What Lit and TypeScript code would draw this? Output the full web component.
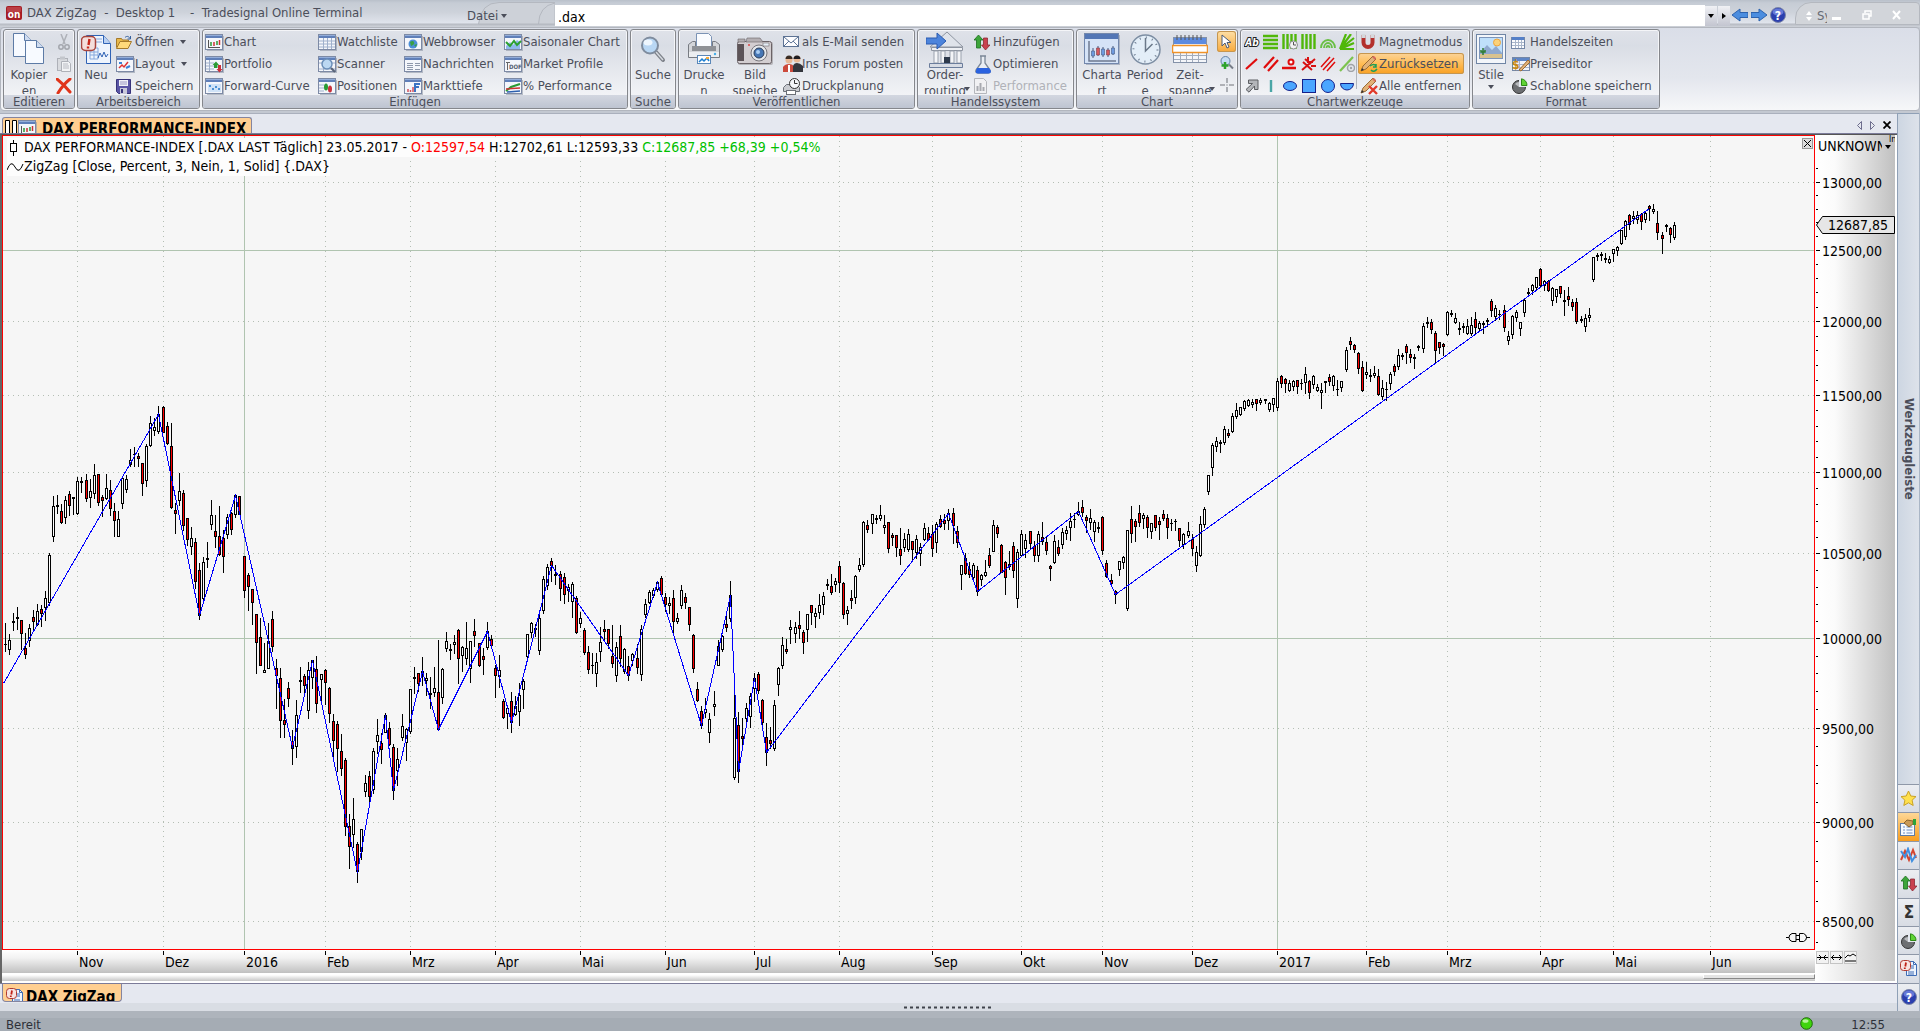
import { LitElement, html, svg, css, type TemplateResult } from "lit";
import { customElement } from "lit/decorators.js";

/* ------------------------------------------------------------------ */
/* Chart data                                                          */
/* ------------------------------------------------------------------ */

interface Segment {
  x: number;
  y: number;
  unit: number;
  rows: string;
}

interface Candle {
  x: number;
  high: number;
  top: number;
  bottom: number;
  low: number;
  kind: string;
}

// Each row is "x high bodyTop bodyBottom low kind" in sub-pixel units relative
// to the segment origin. Kinds: r = falling, w = rising, k = doji.
const SEGMENTS: Segment[] = [
  {
    x: 0,
    y: 380,
    unit: 3,
    rows: `16 729 792 794 815 k|28 762 780 808 824 w|40 701 723 726 752 k|52 681 711 714 749 k|64 720 720 760 808 r|76 759 804 824 836 r|88 732 744 780 800 w|100 690 711 724 750 r|112 672 693 734 735 w|124 675 687 700 738 r|136 633 655 682 722 w|148 519 525 667 675 w|160 350 379 470 483 w|172 345 376 379 399 k|184 372 393 427 429 r|196 350 360 412 429 w|208 333 342 376 405 r|220 351 352 355 402 k|232 291 303 401 404 w|244 291 304 307 336 k|259 282 300 355 365 r|271 297 334 352 383 w|283 252 286 341 356 w|295 282 283 367 375 r|307 345 352 361 410 r|319 282 325 355 357 w|331 300 331 385 407 r|343 370 393 421 470 r|355 393 418 469 470 w|367 290 295 370 386 w|379 286 298 328 338 w|391 207 241 252 260 w|403 201 222 224 258 k|415 219 229 235 258 r|427 249 250 310 345 r|439 193 199 301 318 w|451 108 130 196 198 w|463 114 142 151 165 w|475 78 103 155 161 w|490 78 82 157 158 r|502 126 139 190 192 r|514 129 199 382 386 r|526 369 390 400 459 r|538 281 334 361 375 w|550 330 340 436 450 r|562 415 415 478 496 r|574 441 475 499 524 w|586 475 487 604 626 r|598 549 570 706 717 r|610 531 547 655 657 w|622 486 535 538 563 k|634 360 406 433 447 w|646 405 453 469 503 r|658 378 469 523 525 r|670 450 475 529 576 r|682 402 412 463 476 w|694 396 400 448 462 r|706 345 346 403 411 w|718 348 349 403 404 r|733 528 529 631 651 r|745 579 586 619 690 r|757 628 628 667 732 r|769 703 703 787 879 r|781 715 771 856 857 r|793 789 870 877 878 w|805 729 783 865 866 w|817 693 718 799 815 r|829 837 865 886 984 r|841 864 895 1021 1071 r|853 958 1021 1033 1071 r|865 906 925 955 978 r|877 1050 1083 1105 1152 r|889 960 1006 1099 1131 w|901 861 901 904 936 k|913 882 889 916 938 r|925 846 871 991 1014 w|937 840 841 892 924 w|949 828 868 970 996 r|964 882 883 898 970 w|976 867 871 907 972 r|988 922 925 1000 1026 r|1000 1002 1024 1081 1140 r|1012 1023 1033 1105 1175 r|1024 1062 1114 1165 1185 r|1036 1134 1141 1339 1365 r|1048 1302 1339 1399 1464 r|1060 1254 1318 1363 1403 w|1072 1386 1393 1475 1506 r|1084 1347 1348 1413 1437 w|1096 1185 1210 1234 1250 w|1108 1173 1189 1249 1283 r|1120 1104 1114 1228 1240 w|1132 1017 1066 1084 1120 w|1144 1060 1090 1108 1149 r|1156 999 1006 1057 1058 w|1168 1026 1045 1093 1095 r|1180 1092 1102 1231 1257 r|1192 1104 1138 1171 1216 w`,
  },
  {
    x: 400,
    y: 530,
    unit: 3,
    rows: `7 552 589 622 632 w|19 594 598 637 690 w|31 477 478 604 610 w|43 411 441 445 491 k|55 430 430 460 483 r|67 381 424 434 465 w|79 429 445 451 495 w|91 441 490 493 534 k|103 411 475 487 500 w|115 330 487 598 600 r|127 414 418 502 519 w|139 306 334 355 363 w|151 342 357 360 387 k|163 315 337 343 371 w|175 297 301 385 459 r|187 348 352 376 423 w|199 276 355 385 402 w|211 333 334 415 456 w|223 267 304 316 348 r|238 340 340 406 410 r|250 354 379 388 432 r|262 276 304 352 357 w|274 315 328 346 350 r|286 405 415 436 501 r|298 375 421 439 471 w|310 508 514 563 566 r|322 531 535 550 594 w|334 486 514 577 606 r|346 498 528 553 557 w|358 459 496 544 585 w|370 447 454 478 534 w|382 312 313 379 381 w|394 276 280 307 322 w|406 282 295 298 318 k|418 252 265 361 372 w|430 138 148 241 251 w|442 102 112 166 177 w|454 84 94 106 153 r|466 105 132 135 162 k|481 124 133 175 210 r|493 129 142 193 219 r|505 162 172 180 215 w|517 156 163 214 263 w|529 198 205 307 309 r|541 246 265 280 293 w|553 295 301 367 372 r|565 348 367 418 429 r|577 369 405 407 431 k|589 369 397 430 468 w|601 291 337 364 393 w|613 270 298 304 333 r|625 297 298 340 356 r|637 285 379 400 413 r|649 337 352 436 453 w|661 285 319 385 410 r|673 354 358 423 430 w|685 378 409 436 450 r|697 370 373 391 407 w|712 342 385 412 429 r|724 285 298 433 450 w|736 208 223 253 261 w|748 180 187 217 221 w|760 174 180 196 203 w|772 153 157 178 183 w|784 138 145 193 195 r|796 190 202 223 243 r|808 202 220 226 249 w|820 181 205 274 309 r|832 249 265 274 281 w|844 165 181 226 234 w|856 189 202 217 236 r|868 232 232 283 302 r|880 312 316 415 426 r|892 456 478 511 513 r|904 528 544 586 594 r|916 504 538 546 561 w|928 549 568 607 636 w|943 483 523 529 555 w|955 330 349 406 407 w|967 315 319 358 365 w|979 258 283 292 305 r|991 153 196 265 275 w|1003 495 565 742 749 w|1015 546 586 724 756 r|1027 564 619 625 642 r|1039 519 535 565 575 w|1051 489 499 559 591 w|1063 429 445 475 515 w|1075 426 433 481 489 r|1087 507 511 577 583 r|1099 579 622 667 705 r|1111 591 631 640 654 r|1123 510 526 655 660 w|1135 411 415 463 495 w`,
  },
  {
    x: 780,
    y: 480,
    unit: 3,
    rows: `7 471 496 556 564 w|19 477 508 514 521 r|31 420 442 448 489 w|46 426 442 460 486 w|58 393 436 445 474 r|70 450 457 487 519 r|82 402 403 448 483 w|94 375 376 397 432 r|106 384 400 409 441 w|118 342 376 397 415 w|130 336 349 373 402 w|142 297 312 316 327 k|154 282 319 337 342 r|166 295 304 313 333 w|178 243 259 307 336 r|190 307 310 403 414 r|202 378 391 400 432 w|214 330 355 361 384 r|226 285 289 352 369 w|238 234 256 268 273 w|250 123 127 253 258 w|262 121 136 149 158 r|277 102 103 130 159 w|289 105 114 118 131 k|301 75 106 115 120 w|313 105 136 142 159 w|325 126 127 205 216 r|337 159 166 172 195 r|349 165 166 202 228 r|361 144 208 226 252 r|373 159 178 202 213 w|385 147 163 208 215 w|397 183 184 208 242 r|409 165 178 217 234 w|421 190 202 220 255 w|433 129 145 178 180 w|445 141 160 178 180 r|457 135 163 205 228 r|469 126 133 187 216 w|481 105 118 139 141 r|493 102 121 130 147 r|505 87 100 121 147 w|520 84 100 136 189 r|532 138 154 187 203 r|544 255 256 283 327 w|556 219 235 280 282 r|568 246 268 283 291 r|580 249 256 292 294 w|592 258 271 334 345 r|604 282 286 298 315 w|616 240 277 286 288 w|628 204 226 256 261 r|640 120 136 214 215 w|652 135 142 160 171 r|664 192 196 277 278 r|676 243 247 292 342 r|688 213 253 259 267 w|700 186 199 271 291 r|712 207 217 355 381 w|724 150 163 226 230 w|736 162 181 205 231 w|751 153 154 190 205 r|763 183 199 226 243 r|775 153 163 226 245 w|787 126 172 184 192 r|799 171 187 211 222 r|811 255 259 265 300 r|823 165 184 247 249 w|835 180 202 220 227 r|847 144 157 193 204 w|859 138 151 160 177 w|871 99 124 142 180 w|883 99 117 119 141 k|895 66 94 103 105 w|907 60 82 97 108 r|919 105 112 121 158 r|931 87 115 127 147 w|943 120 127 154 183 w|955 126 142 145 158 k|967 108 112 211 222 r|979 240 250 289 292 r|994 282 301 310 312 r|1006 330 333 343 369 r|1018 243 244 268 285 w|1030 228 232 247 266 w|1042 150 151 385 390 w|1054 78 118 160 186 r|1066 117 124 139 183 r|1078 75 100 127 138 r|1090 99 106 115 144 w|1102 105 112 142 171 r|1114 129 130 154 174 w|1126 105 106 142 150 r|1138 112 124 133 177 r|1150 90 103 115 120 r|1162 102 115 142 174 r|1174 117 129 131 150 k|1186 117 123 125 150 k|1198 144 145 181 198 r|1210 159 163 193 205 w|1225 126 154 166 171 w|1237 162 178 205 225 r|1249 198 217 256 273 w|1261 108 133 226 228 w|1273 81 88 133 141 w`,
  },
  {
    x: 1200,
    y: 180,
    unit: 2.904,
    rows: `24 885 885 935 942 w|36 789 796 863 885 w|47 771 784 799 813 w|59 780 787 791 816 k|71 738 748 788 792 w|82 747 760 767 771 r|94 699 709 754 756 w|106 669 691 709 714 w|117 681 682 703 706 w|129 660 664 685 690 w|141 657 661 676 680 w|152 657 667 673 681 w|164 657 658 670 690 r|175 654 661 668 673 w|190 657 658 662 669 k|201 666 670 689 693 w|213 654 655 673 693 w|225 594 604 682 690 w|236 585 589 610 621 r|248 594 598 610 636 r|260 600 610 631 633 w|271 600 604 619 630 w|283 600 601 619 639 r|295 597 609 611 627 k|306 561 583 607 639 w|318 600 604 637 654 r|329 585 589 613 624 w|341 612 622 631 633 w|352 609 631 638 684 w|364 603 604 607 636 k|376 582 592 604 615 r|387 585 589 616 630 w|399 600 627 629 645 k|411 603 604 622 633 w|425 501 511 569 573 w|437 471 484 493 507 r|448 492 496 508 516 r|460 516 520 566 579 r|472 543 562 631 633 r|483 546 577 583 594 w|495 567 587 590 603 k|506 558 580 587 591 w|518 567 589 643 645 r|530 600 625 649 657 w|541 606 627 629 660 k|553 576 583 610 627 w|564 552 559 574 585 r|576 507 526 559 567 w|588 519 525 530 537 k|599 492 499 517 549 r|611 507 523 532 546 r|622 522 531 534 564 k|634 495 498 502 510 k|648 429 439 505 516 w|660 411 426 430 441 k|672 417 427 448 460 r|683 453 460 512 549 r|695 486 487 502 519 r|707 489 492 499 525 r|718 393 397 463 465 w|730 390 399 403 408 k|741 399 415 427 429 w|753 426 444 447 462 k|765 429 438 442 456 k|776 417 439 460 462 w|788 411 436 460 465 w|799 396 418 442 459 r|811 423 430 445 450 w|823 423 429 432 459 k|834 414 421 425 438 k|846 357 364 391 408 r|858 375 385 409 420 w|869 390 402 404 417 k|884 375 391 442 453 r|895 453 469 482 492 w|907 405 409 463 474 w|919 390 397 412 423 w|930 426 427 445 465 w|942 357 361 397 408 w|953 324 337 341 348 k|965 312 317 331 342 w|977 291 292 322 327 w|988 264 268 316 318 r|1000 300 304 316 330 w|1012 300 304 331 333 r|1023 321 325 361 375 w|1035 327 328 349 366 w|1046 318 319 341 351 r|1058 330 361 364 405 k|1069 321 349 358 375 r|1081 357 367 379 390 r|1093 354 367 425 429 r|1107 408 417 422 426 k|1119 402 415 439 453 w|1131 384 406 412 423 w|1142 231 232 298 303 w|1154 219 226 230 240 k|1165 216 223 226 240 k|1177 219 234 238 246 k|1189 228 238 247 249 w|1200 207 208 220 243 w|1212 198 202 211 225 w|1223 150 151 190 192 w|1235 120 124 169 177 w|1247 102 106 133 147 r|1258 93 109 116 129 w|1270 93 106 118 129 w|1282 99 103 124 147 r|1293 96 100 118 126 w|1305 75 79 85 120 r|1316 72 88 95 99 w|1328 93 130 157 177 r|1343 156 166 175 219 r|1354 132 135 138 153 k|1366 141 145 163 186 r|1378 126 136 172 177 w`,
  },
];

const CANDLES: Candle[] = SEGMENTS.flatMap((s) =>
  s.rows.split("|").map((row) => {
    const p = row.split(" ");
    const py = (v: string) => s.y + Math.floor(Number(v) / 3);
    return {
      x: s.x + Math.floor(Number(p[0]) / s.unit),
      high: py(p[1]),
      top: py(p[2]),
      bottom: py(p[3]),
      low: py(p[4]),
      kind: p[5],
    };
  }),
);

const ZIGZAG: [number, number][] = [
  [3, 683], [158, 414], [199, 615], [235, 495], [292, 747], [312, 660],
  [357, 872], [385, 715], [393, 790], [422, 671], [438, 729], [487, 631],
  [511, 722], [551, 565], [628, 675], [657, 582], [701, 725], [730, 595],
  [738, 771], [754, 678], [766, 752], [948, 513], [977, 591], [1078, 511],
  [1115, 594], [1649, 208],
];

const MONTHS: { x: number; label: string; year?: boolean }[] = [
  { x: 77, label: "Nov" },
  { x: 163, label: "Dez" },
  { x: 244, label: "2016", year: true },
  { x: 325, label: "Feb" },
  { x: 410, label: "Mrz" },
  { x: 495, label: "Apr" },
  { x: 580, label: "Mai" },
  { x: 665, label: "Jun" },
  { x: 754, label: "Jul" },
  { x: 839, label: "Aug" },
  { x: 932, label: "Sep" },
  { x: 1021, label: "Okt" },
  { x: 1102, label: "Nov" },
  { x: 1192, label: "Dez" },
  { x: 1277, label: "2017", year: true },
  { x: 1366, label: "Feb" },
  { x: 1447, label: "Mrz" },
  { x: 1540, label: "Apr" },
  { x: 1613, label: "Mai" },
  { x: 1710, label: "Jun" },
];

// Plot area in chart coordinates, without its one-pixel border.
const PLOT = { x: 3, y: 136, w: 1811, h: 813 };
const priceY = (p: number) => Math.floor(182.3 + 1740 * Math.log(13000 / p));
const PRICES = [13000, 12500, 12000, 11500, 11000, 10500, 10000, 9500, 9000, 8500];
const MINOR_PRICES = Array.from({ length: 48 }, (_, i) => 8400 + i * 100).filter((p) => p % 500 !== 0);
// The axes span the plot together with its border.
const pctX = (x: number) => `left:${(((x - PLOT.x + 1) / (PLOT.w + 2)) * 100).toFixed(3)}%`;
const pctY = (y: number) => `top:${(((y - PLOT.y + 1) / (PLOT.h + 2)) * 100).toFixed(3)}%`;

/* ------------------------------------------------------------------ */
/* Icons                                                               */
/* ------------------------------------------------------------------ */

const icon = (w: number, h: number, body: TemplateResult) =>
  html`<svg class="icon" width=${w} height=${h} viewBox="0 0 ${w} ${h}" aria-hidden="true">${body}</svg>`;

const caret = html`<svg class="icon" width="6" height="4" viewBox="0 0 6 4" aria-hidden="true"><path d="M0 0h6L3 4z" fill="currentColor" /></svg>`;

// Small window frame that the insert icons share.
const win = (body: TemplateResult) =>
  icon(19, 17, svg`
    <rect x="2" y="2" width="17" height="15" fill="#8f97a6" opacity=".6" />
    <rect x=".5" y=".5" width="17" height="15" fill="#f4f6fb" stroke="#7d8aa5" />
    <rect x="1" y="1" width="16" height="3" fill="#5f7fb9" />
    <rect x="1" y="1" width="16" height="1" fill="#93add9" />${body}`);

const docPage = (x: number, y: number) => svg`
  <path d="M${x + 0.5} ${y + 0.5}h11l7 7v16h-18z" fill="#f7faff" stroke="#5d7ba6" />
  <path d="M${x + 11.5} ${y + 0.5}v7h7" fill="#cfdcf0" stroke="#5d7ba6" />`;

const pie = svg`
  <circle cx="8" cy="9" r="6.5" fill="#6d6f72" stroke="#333" />
  <path d="M4 6a5 5 0 0 1 4-2v5z" fill="#b9bbbe" />
  <path d="M8 9V1h8v8z" fill="#e4e8ef" />
  <path d="M10.500 7.500V.8a6.500 6.500 0 0 1 5.500 6.700z" fill="#5fd334" stroke="#2c8a14" />`;

const pencil = svg`
  <path d="M1 16l2-5L13 1l3 3L6 14z" fill="#e2b278" stroke="#9b6b33" />
  <path d="M12 2l2-1 2 2-1 2z" fill="#d66a5c" />
  <path d="M1 16l1-3 2 2z" fill="#333" />`;

const newsDoc = svg`
  <path d="M6.500 1.500h7l3 3v11h-10z" fill="#eef4fd" stroke="#3f6cb5" />
  <path d="M13.500 1.500v3h3M11 6h3M11 8h3M8 12h6M8 14h6" stroke="#3f6cb5" fill="none" />
  <rect x=".5" y=".5" width="10" height="10" rx="3" fill="#f7e3e0" stroke="#b03a30" />
  <path d="M6 2.500L5.300 6.500M4.800 7.500v1.500" stroke="#c02318" stroke-width="1.800" />`;

const help = svg`
  <circle cx="8" cy="8" r="7.500" fill="#2b3fae" stroke="#7d86a8" />
  <ellipse cx="8" cy="5" rx="5.500" ry="3.500" fill="#7f93e8" opacity=".7" />
  <text x="8" y="12.500" text-anchor="middle" font-size="12" font-weight="700" fill="#fff">?</text>`;

const arrowsUpDown = svg`
  <path d="M4.500 1L9 6H6.500v8h-4V6H0z" fill="#3da53a" stroke="#1d7020" stroke-width=".8" />
  <path d="M11.500 16L7.500 11h2V4h4v7H16z" fill="#c9414f" stroke="#8e2834" stroke-width=".8" />`;

const I = {
  app: icon(16, 14, svg`<rect width="16" height="14" rx="2" fill="#a51d24" /><rect x="1" y="1" width="14" height="5" rx="1" fill="#c9575b" opacity=".6" /><text x="8" y="12" text-anchor="middle" font-size="10" font-weight="700" fill="#fff">on</text>`),
  copy: icon(32, 32, svg`${docPage(0, 0)}${docPage(12, 7)}`),
  cut: icon(14, 16, svg`<path d="M4 0l4 10M10 0L6 10" stroke="#aeb1b8" stroke-width="1.500" /><circle cx="4" cy="13" r="2.200" fill="none" stroke="#a3a6ad" stroke-width="1.500" /><circle cx="10" cy="13" r="2.200" fill="none" stroke="#a3a6ad" stroke-width="1.500" />`),
  paste: icon(16, 17, svg`<rect x="1.500" y="2.500" width="10" height="12" fill="#d9dbdf" stroke="#aeb1b8" /><rect x="4" y=".5" width="5" height="3" fill="#c3c6cc" /><path d="M5.500 5.500h7l2 2v8h-9z" fill="#f2f3f5" stroke="#aeb1b8" /><path d="M7 8h5M7 10h6M7 12h6" stroke="#b9bbc2" />`),
  del: icon(16, 16, svg`<path d="M1 1c5 4 9 8 13 13M14 1C9 5 5 10 2 15" stroke="#e0341a" stroke-width="3" fill="none" stroke-linecap="round" />`),
  neu: icon(31, 31, svg`<path d="M5.500 1.500h17l7 8v20h-24z" fill="#eef4fd" stroke="#2f62b5" /><path d="M22.500 1.500v8h7" fill="#b9d0f2" stroke="#2f62b5" /><path d="M9 14h8v11H9zM13 14v11M9 18h8M9 21h8M15 5h6M15 8h6" stroke="#86a8dc" fill="none" /><path d="M17 24l2-5 2 4 2-5 2 5 2-3" stroke="#2f62b5" fill="none" /><rect x=".5" y="2.500" width="14" height="14" rx="4" fill="#f4dedb" stroke="#a8433b" stroke-width="1.500" /><path d="M8.500 5l-1 6M7 12.500v2" stroke="#c8281b" stroke-width="2.400" />`),
  open: icon(16, 14, svg`<path d="M.5 12.500v-9h5l1 1.500h6v3" fill="#e8b84a" stroke="#a5792a" /><path d="M.5 13.500L4 6.500h11.500L12 13.500z" fill="#ffd97a" stroke="#a5792a" /><path d="M9 2.500c2-2 4-1 5 1M14.500 1v3h-3" stroke="#35619e" fill="none" />`),
  layout: win(svg`<path d="M3 12l3-3 2 2 4-5" stroke="#d33" fill="none" stroke-width="1.500" /><path d="M10 12l4-2M3 7h3" stroke="#3b82d6" stroke-width="2" />`),
  save: icon(15, 15, svg`<path d="M.5.5h14v14H2.500l-2-2z" fill="#5a55a5" stroke="#37337a" /><rect x="3" y="1" width="9" height="6" fill="#f1f1f8" /><path d="M4 3h7M4 5h7" stroke="#9a98c4" /><rect x="4" y="9" width="7" height="6" fill="#c9c9da" /><rect x="5" y="10" width="2" height="4" fill="#37337a" />`),
  chart: win(svg`<path d="M3.500 14V6M3 13.500h12" stroke="#555" fill="none" /><path d="M6 8v4M12 7v4" stroke="#2a9a35" stroke-width="1.500" /><path d="M9 8v4M14.500 6v5" stroke="#c33" stroke-width="1.500" />`),
  portfolio: win(svg`<path d="M1 7h8M1 10h8M1 13h8M4.500 4v11" stroke="#9fb0cc" /><path d="M9 12V9H7.500L11 5.500 14 9h-1.500v3z" fill="#2a9a35" /><path d="M13 9v4h-1.500l3 3.500 3-3.500H16V9z" fill="#c8313b" />`),
  forward: win(svg`<rect x="3" y="6" width="13" height="8" fill="#cfe2f7" /><circle cx="5" cy="8" r="1" fill="#1f74c9" /><circle cx="8" cy="11" r="1" fill="#1f74c9" /><circle cx="11" cy="9" r="1" fill="#1f74c9" /><circle cx="14" cy="11" r="1" fill="#1f74c9" />`),
  watch: win(svg`<path d="M1 7h16M1 10h16M1 13h16M5.500 4v11M9.500 4v11M13.500 4v11" stroke="#9fb0cc" />`),
  scanner: win(svg`<path d="M1 7h16M1 13h16M5.500 4v11" stroke="#9fb0cc" /><circle cx="9" cy="8" r="5" fill="#bcd8f2" stroke="#6c8fb8" stroke-width="1.500" /><path d="M13 12l4 4" stroke="#596478" stroke-width="2.200" />`),
  positions: win(svg`<path d="M1 7h5M1 10h5M1 13h5" stroke="#9fb0cc" /><ellipse cx="8" cy="9" rx="2" ry="3.500" fill="#2a9a35" /><ellipse cx="12" cy="11" rx="2" ry="3.500" fill="#c8313b" />`),
  web: win(svg`<circle cx="9" cy="10" r="4.500" fill="#4b8fd8" /><path d="M6 8q3-2 4 0t-1 3-2 1zM10 11l3-1-1 3z" fill="#3aa045" />`),
  news: win(svg`<path d="M3 7.500h6M3 9.500h6M3 11.500h6M3 13.500h6M11 7.500h5M11 9.500h5M11 13.500h5" stroke="#8e98ab" />`),
  depth: win(svg`<path d="M4 14v-3M6.500 14v-2M9 14V9" stroke="#d4505a" stroke-width="1.500" /><path d="M11 14V6h5M11 9h4" stroke="#3b74c4" stroke-width="2" fill="none" />`),
  seasonal: win(svg`<path d="M2 12l4-4 3 3 4-5 3 2v7H2z" fill="#8fb8ea" /><path d="M2 8l4 4 4-5 3 4 4-4" stroke="#2ba02f" stroke-width="2" fill="none" />`),
  profile: win(svg`<path d="M2 6.500h4M3.500 6v8" stroke="#666" /><text x="5" y="13" font-size="6" font-weight="700" fill="#555e70">DOF</text>`),
  percent: win(svg`<path d="M2 13l5-4 9-3" stroke="#2a9a35" stroke-width="2" fill="none" /><path d="M2 11l14-1" stroke="#c33" stroke-width="1.500" /><path d="M3 14l13-1" stroke="#2c5fae" stroke-width="1.500" />`),
  search: icon(26, 27, svg`<path d="M16 16l7 8" stroke="#7c8088" stroke-width="4" stroke-linecap="round" /><path d="M16 16l7 8" stroke="#d5d9e0" stroke-width="1.500" /><circle cx="10" cy="9.500" r="8" fill="#b9d7f4" stroke="#7f8c9e" stroke-width="2" /><ellipse cx="8" cy="6.500" rx="4.500" ry="3" fill="#eef6fe" />`),
  print: icon(32, 32, svg`<path d="M8.500.5h12l3 3v10h-15z" fill="#fafcff" stroke="#7b93b5" /><path d="M.5 11.500l4-3h3v5h17v-5h3l4 3v13H.5z" fill="#d3d5d9" stroke="#777b82" /><rect x="4" y="13" width="24" height="5" fill="#8e9196" /><rect x="1" y="19" width="30" height="5" fill="#eceef1" /><circle cx="27" cy="21" r="1.200" fill="#44aee8" /><rect x="9.500" y="22.500" width="13" height="8" fill="#fff" stroke="#5a87b8" /><path d="M11 29l3-3 2 2 3-3 2 3" stroke="#1d7fd1" fill="none" stroke-width="1.500" /><rect x="18" y="24" width="3" height="2" fill="#f2a73a" />`),
  camera: icon(36, 32, svg`<rect x="1" y="9" width="35" height="23" rx="2" fill="#8a8688" opacity=".5" /><rect x=".5" y="8.500" width="34" height="22" rx="2" fill="#d3ced1" stroke="#6a6266" /><path d="M1 6h7v3H1zM10 5h13l3 4H9z" fill="#b4afb3" stroke="#6a6266" stroke-width=".6" /><rect x="1" y="11" width="6" height="17" fill="#5c5357" /><rect x="26" y="10" width="6" height="3" fill="#e6eef7" stroke="#736d70" stroke-width=".6" /><circle cx="22" cy="20" r="8" fill="#e4e7eb" stroke="#77757b" /><circle cx="22" cy="20" r="5" fill="#4777b5" stroke="#2c3d58" /><circle cx="21" cy="19" r="2" fill="#a9cdf2" /><circle cx="12" cy="12" r="1" fill="#d44" />`),
  mail: icon(16, 12, svg`<rect x=".5" y=".5" width="15" height="10" fill="#fdfdff" stroke="#5d7394" /><path d="M1 1l7 6 7-6M1 10l5-5M15 10l-5-5" stroke="#5d7394" fill="none" />`),
  forum: icon(20, 18, svg`<circle cx="6" cy="5" r="3.500" fill="#e8b795" /><path d="M2.500 4a3.500 3.500 0 0 1 7 0z" fill="#3a2c24" /><path d="M0 17v-5q2-3 6-3t5 3v5z" fill="#cc4a3c" /><path d="M5 10h2v7H5z" fill="#fff" /><circle cx="14" cy="4" r="3.500" fill="#e8b795" /><path d="M10.500 4a3.500 3.500 0 0 1 7 0z" fill="#1d1d22" /><path d="M10 17v-6q1-3 4-3t6 3v6z" fill="#33353c" />`),
  schedule: icon(18, 17, svg`<path d="M.5 9.500l3-3h10l3 3v4H.5z" fill="#c9cbd0" stroke="#6c7078" /><rect x="3.500" y="12.500" width="9" height="4" fill="#fff" stroke="#6c7078" /><circle cx="11.500" cy="5.500" r="5" fill="#f4f6f9" stroke="#333" /><path d="M11.500 2v3.500h3" stroke="#333" fill="none" />`),
  bank: icon(38, 37, svg`<path d="M4 16L21 1l16 15z" fill="#dfe3ea" stroke="#8e95a1" /><path d="M5.500 16.500h31v3h-31z" fill="#eef0f4" stroke="#8e95a1" /><path d="M8 20h4v12H8zM15 20h4v12h-4zM24 20h4v12h-4zM31 20h4v12h-4z" fill="#f4f5f8" stroke="#9aa1ad" /><rect x="18" y="26" width="6" height="8" fill="#2e3a4c" /><path d="M3.500 32.500h33v4h-33z" fill="#d8dce4" stroke="#6b7d9c" /><path d="M0 7h11V2l9 8-9 8v-5H0z" fill="#4c84dc" stroke="#2b5bb0" />`),
  updown: icon(16, 17, arrowsUpDown),
  flask: icon(18, 19, svg`<path d="M6 1h6M7 1v7l-5 7q-1 3 2 3h10q3 0 2-3l-5-7V1" fill="#e9edf3" stroke="#7b8797" stroke-width="1.300" /><path d="M3 13h12l2 3q0 3-3 2.500H4q-3 0-2-3z" fill="#2a62e0" />`),
  perf: icon(13, 16, svg`<path d="M.5.5h9l3 3v12H.5z" fill="#f1f1f3" stroke="#b4b6bb" /><path d="M3.500 13V8M6.500 13V5M9.500 13V9" stroke="#a8aab0" stroke-width="2" />`),
  chartBig: icon(36, 32, svg`<rect x="2" y="2" width="34" height="30" fill="#9aa3b3" opacity=".7" /><rect x=".5" y=".5" width="34" height="30" fill="#d5e3f7" stroke="#7287ac" /><rect x="1" y="1" width="33" height="5" fill="#5376b5" /><path d="M5 8v20h27" stroke="#6e7a90" fill="none" stroke-width="1.500" /><path d="M9 15v10M14 13v10M19 14v10M24 15v9M29 13v9" stroke="#44597f" /><path d="M7.500 18h3v5h-3zM17.500 16h3v6h-3zM27.500 15h3v6h-3z" fill="#6d9ae0" stroke="#44597f" stroke-width=".6" /><path d="M12.500 15h3v7h-3zM22.500 17h3v5h-3z" fill="#d45a5f" stroke="#7d3b49" stroke-width=".6" />`),
  clock: icon(31, 31, svg`<circle cx="15.500" cy="15.500" r="14.500" fill="#e3eef8" stroke="#7d8ea3" stroke-width="1.500" /><circle cx="15.500" cy="15.500" r="12" fill="none" stroke="#6c7b8f" stroke-dasharray="1 5.280" stroke-width="2" /><path d="M15.500 4v13l7-7" stroke="#6a7889" stroke-width="1.500" fill="none" />`),
  calendarBig: icon(36, 30, svg`<rect x="1.500" y="3.500" width="33" height="25" fill="#f4f6fa" stroke="#8391a8" /><rect x="2" y="4" width="32" height="6" fill="#5c8be0" /><path d="M5 1v5M9 1v5M13 1v5M17 1v5M21 1v5M25 1v5M29 1v5" stroke="#555" /><path d="M2 21.500h32M2 25.500h32M8.500 11v17M14.500 11v17M20.500 11v17M26.500 11v17" stroke="#a3adbd" /><rect x=".5" y="11.500" width="35" height="7" fill="#fff" stroke="#ef9228" stroke-width="1.500" />`),
  cursor: icon(12, 15, svg`<path d="M1 1v11l3-3 2 5 2-1-2-4.500h4z" fill="#fff" stroke="#4a5a75" />`),
  zoom: icon(14, 15, svg`<circle cx="5.500" cy="5" r="4.500" fill="#c4dcf4" stroke="#6480a5" /><path d="M9 8.500l4 4" stroke="#777d88" stroke-width="2" /><path d="M5 6v7M1.500 9.500h7" stroke="#2da32a" stroke-width="2.500" />`),
  cross: icon(14, 14, svg`<path d="M7 0v5M7 9v5M0 7h5M9 7h5" stroke="#9a9da3" stroke-width="1.600" /><circle cx="7" cy="7" r=".8" fill="#9a9da3" />`),
  text: icon(16, 14, svg`<text x="8" y="11" text-anchor="middle" font-size="10" font-weight="700" font-style="italic" fill="#fff" stroke="#222" stroke-width="2" paint-order="stroke">Ab</text>`),
  hLines: icon(16, 16, svg`<path d="M0 2h15M0 6h15M0 10h15M0 14h15" stroke="#50b70a" stroke-width="2.400" />`),
  vClock: icon(16, 16, svg`<path d="M1.500 0v15M5.500 0v15M9.500 0v15M13.500 0v15" stroke="#50b70a" stroke-width="2.400" /><circle cx="11.500" cy="11" r="4" fill="#f3f3f3" stroke="#8b8d91" /><path d="M11.500 8v3h2.500" stroke="#555" fill="none" />`),
  vLines: icon(16, 16, svg`<path d="M1.500 0v15M5.500 0v15M9.500 0v15M13.500 0v15" stroke="#50b70a" stroke-width="2.400" />`),
  arcs: icon(16, 16, svg`<path d="M1 14a7 8 0 0 1 14 0M4 14a4 5 0 0 1 8 0M6.500 14a1.500 2 0 0 1 3 0" stroke="#6abf45" stroke-width="1.800" fill="none" />`),
  fan: icon(16, 16, svg`<path d="M1 15L7 0M1 15L12 0M1 15L15 4M1 15l14-6M1 15h14" stroke="#50b70a" stroke-width="2.200" />`),
  trend: icon(14, 14, svg`<path d="M1 12L12 2" stroke="#e00d0d" stroke-width="2.200" />`),
  parallel: icon(16, 16, svg`<path d="M1 12L11 1M5 15L15 4" stroke="#e00d0d" stroke-width="2.200" />`),
  hRay: icon(16, 14, svg`<path d="M0 11h14" stroke="#e00d0d" stroke-width="2.400" /><circle cx="9" cy="5" r="2.500" fill="#fff" stroke="#e00d0d" stroke-width="2" />`),
  fork: icon(16, 16, svg`<path d="M1 14L14 3M2 6l9 8M4 3l6 5M7 1v5h5M10 10h5" stroke="#d81111" stroke-width="2" fill="none" />`),
  channel: icon(16, 16, svg`<path d="M1 11L10 1M3 14L14 2M7 15l8-9" stroke="#e00d0d" stroke-width="1.500" />`),
  regress: icon(16, 16, svg`<path d="M1 15L14 1" stroke="#7cc34f" stroke-width="2.200" /><circle cx="12" cy="12" r="3.500" fill="none" stroke="#a0a3a8" stroke-width="1.500" /><circle cx="12" cy="12" r="1.200" fill="#a0a3a8" />`),
  arrow: icon(14, 14, svg`<path d="M1 10.500L7.500 4.500H3.500V1h9.500v9.500H9.500V7L4 13.200z" fill="#b3b5b9" stroke="#5c5e62" />`),
  vLine: icon(14, 14, svg`<path d="M7 1v12" stroke="#4aa6a6" stroke-width="2.400" />`),
  ellipse: icon(16, 14, svg`<ellipse cx="8" cy="7" rx="6.500" ry="4.500" fill="#4ba6ff" stroke="#14208a" />`),
  square: icon(14, 14, svg`<rect x=".5" y=".5" width="13" height="13" fill="#4ba6ff" stroke="#14208a" />`),
  circle: icon(14, 14, svg`<circle cx="7" cy="7" r="6.500" fill="#4ba6ff" stroke="#14208a" />`),
  half: icon(14, 14, svg`<path d="M.5 4.500h13a6.500 6.500 0 0 1-13 0z" fill="#4ba6ff" stroke="#14208a" />`),
  magnet: icon(16, 16, svg`<path d="M3.500 1v7.500a4.500 4.500 0 0 0 9 0V1" stroke="#b3302c" stroke-width="4" fill="none" /><path d="M3.500 0v4M12.500 0v4" stroke="#d5d8dc" stroke-width="4" />`),
  reset: icon(18, 18, svg`${pencil}<path d="M10 11q4-3 6 0M17 14q-3 4-6 1M16 9v3h-3" stroke="#1e9e58" stroke-width="1.500" fill="none" />`),
  clear: icon(18, 18, svg`${pencil}<path d="M9 9l8 8M17 9l-8 8" stroke="#e03a2a" stroke-width="2.400" />`),
  picture: icon(30, 30, svg`<rect x=".5" y=".5" width="29" height="29" fill="#f3f6fa" stroke="#6f85a5" /><rect x="3.500" y="3.500" width="23" height="21" fill="#bfe0fb" stroke="#7d96bb" /><path d="M4 19l7-8 5 5 4-4 6 7v5H4z" fill="#8fa9cf" /><path d="M4 20h22v4H4z" fill="#d8c28f" /><circle cx="21" cy="8.500" r="3.500" fill="#fbd27a" stroke="#f0a53c" /><path d="M7 14v7M5 16v2h4v-2" stroke="#2e7d32" stroke-width="1.500" fill="none" />`),
  calendar: icon(15, 13, svg`<rect x=".5" y="1.500" width="13" height="11" fill="#fbfcfe" stroke="#7487a6" /><rect x="1" y="1" width="12" height="3" fill="#5580c8" /><path d="M1 6.500h12M1 9.500h12M4.500 4v8M7.500 4v8M10.500 4v8" stroke="#a9b6ca" />`),
  price: icon(20, 16, svg`<rect x="1.500" y="1.500" width="17" height="13" fill="#f2f4f9" stroke="#7487a6" /><rect x="2" y="2" width="16" height="3" fill="#5f86c6" /><path d="M2 8.500h16M2 11.500h16M8.500 5v9" stroke="#a9b6ca" /><text x="1" y="13" font-size="12" font-weight="700" fill="#c98a12">$</text><path d="M8 14L17 4l2 2-9 9z" fill="#e2b278" stroke="#9b6b33" />`),
  pie: icon(17, 16, pie),
  left: icon(16, 14, svg`<path d="M8 1v3.500h8v5H8V13L0 7z" fill="#4b8ddf" stroke="#2d62ad" />`),
  right: icon(16, 14, svg`<path d="M8 1v3.500H0v5h8V13l8-6z" fill="#4b8ddf" stroke="#2d62ad" />`),
  help: icon(16, 16, help),
  star: icon(17, 17, svg`<path d="M8.500 1l2.300 5 5.200.6-3.900 3.600 1.100 5.300-4.700-2.700-4.700 2.700 1.100-5.300L1 6.600 6.200 6z" fill="#ffe04d" stroke="#c9a227" />`),
  props: icon(17, 17, svg`<rect x=".5" y="4.500" width="14" height="12" fill="#f6f9fe" stroke="#5d7ba6" /><path d="M3 8h2M6.500 8h6M3 11h2M6.500 11h6M3 14h2M6.500 14h6" stroke="#6b8bc0" /><path d="M4 4l3-3 6 1v3l-4 3z" fill="#c99a57" stroke="#8a6430" /><rect x="13" y="0" width="3" height="6" fill="#2da33a" />`),
  indicators: icon(17, 17, svg`<path d="M1 13l4-9 4 9 4-10 3 8" stroke="#d3452f" stroke-width="2" fill="none" /><path d="M1 4l4 6 3-8 4 12 4-6" stroke="#3f8fe0" stroke-width="2" fill="none" />`),
  sigma: icon(14, 16, svg`<text x="7" y="14" text-anchor="middle" font-size="17" font-weight="700" fill="#333">Σ</text>`),
  newsDoc: icon(17, 17, newsDoc),
};

/* ------------------------------------------------------------------ */
/* Price chart                                                         */
/* ------------------------------------------------------------------ */

@customElement("price-chart")
export class PriceChart extends LitElement {
  static styles = css`
    :host {
      display: grid;
      grid-template-columns: 1fr 82px;
      grid-template-rows: 1fr 33px;
      min-height: 0;
      font: 14px/19px "DejaVu Sans Condensed", "DejaVu Sans", sans-serif;
      font-stretch: condensed;
      color: #000;
    }
    .plot {
      position: relative;
      min-height: 0;
      border: 1px solid #f00;
      background: #f6f6f6;
      overflow: hidden;
    }
    .canvas {
      position: absolute;
      inset: 0;
      width: 100%;
      height: 100%;
    }
    .legend {
      position: absolute;
      left: 4px;
      top: 2px;
      display: flex;
      flex-direction: column;
      align-items: flex-start;
      white-space: pre;
    }
    .legend-row {
      display: flex;
      align-items: center;
      background: #fdfdfd;
    }
    .legend-row svg { width: 17px; flex: none; }
    .open { color: #f00; }
    .close { color: #00c000; }
    .close-chart {
      position: absolute;
      right: 1px;
      top: 2px;
      width: 11px;
      height: 11px;
      padding: 0;
      border: 1px solid #999;
      background: #ddd;
      display: grid;
      place-items: center;
    }
    .plug { position: absolute; right: 4px; bottom: 7px; }
    .prices {
      position: relative;
      border-right: 2px solid #fff;
      background: linear-gradient(90deg, #fff 0, #fbfbfb 20px, #c0c0c0 100%);
    }
    .currency {
      display: flex;
      align-items: center;
      padding: 2px 3px 0 3px;
    }
    .currency select {
      appearance: none;
      border: 0;
      padding: 0;
      margin: 0 3px 0 0;
      background: none;
      font: inherit;
      color: inherit;
      width: 64px;
      overflow: hidden;
      text-overflow: clip;
    }
    .log { position: absolute; right: 0; top: 0; font-size: 9px; line-height: 9px; width: 6px; overflow: hidden; }
    .price {
      position: absolute;
      left: 0;
      margin-top: -9px;
      padding: 1px 0 0 7px;
    }
    .price::before { content: ""; position: absolute; left: 1px; top: 9px; width: 4px; height: 1px; background: #000; }
    .minor { position: absolute; left: 1px; width: 2px; height: 1px; background: #000; }
    .last {
      position: absolute;
      left: 1px;
      right: 0;
      height: 18px;
      margin-top: -9px;
      display: flex;
      align-items: center;
      padding: 1px 0 0 12px;
      box-sizing: border-box;
    }
    .last svg { position: absolute; inset: 0; }
    .last span { position: relative; }
    .dates {
      position: relative;
      background: linear-gradient(#fff, #f2f2f2 8px, #c0c0c0 23px, #fff 23px, #fff 25px, #c6c6c6 31px, #fff 31px);
      overflow: hidden;
    }
    .date {
      position: absolute;
      top: 1px;
      padding: 2px 0 0 2px;
    }
    .date::before { content: ""; position: absolute; left: 0; top: 0; width: 1px; height: 4px; background: #000; }
    .thumb {
      position: absolute;
      right: 0;
      top: 24px;
      width: 112px;
      height: 5px;
      box-sizing: border-box;
      border: 1px solid #fff;
      border-right-color: #888;
      border-bottom-color: #888;
      background: #e4e4e4;
    }
    .corner {
      display: flex;
      gap: 1px;
      padding: 1px 0 0 1px;
      align-items: flex-start;
      background: linear-gradient(90deg, #fff, #c8c8c8);
      border-right: 2px solid #fff;
      border-bottom: 2px solid #fff;
    }
    .corner button {
      width: 13px;
      height: 13px;
      padding: 0;
      border: 1px solid #c4c4c4;
      background: #f2f2f2;
      display: grid;
      place-items: center;
    }
  `;

  private renderCandle(c: Candle) {
    const fill = c.kind === "r" ? "#f00" : c.kind === "w" ? "#fff" : "#000";
    return svg`
      <rect x=${c.x} y=${c.high} width="1" height=${c.low - c.high + 1} />
      <rect x=${c.x - 1} y=${c.top} width="3" height=${c.bottom - c.top + 1} />
      ${c.bottom - c.top > 1
        ? svg`<rect x=${c.x} y=${c.top + 1} width="1" height=${c.bottom - c.top - 1} fill=${fill} />`
        : null}`;
  }

  render() {
    const right = PLOT.x + PLOT.w;
    const bottom = PLOT.y + PLOT.h;
    return html`
      <div class="plot">
        <svg class="canvas" viewBox="${PLOT.x} ${PLOT.y} ${PLOT.w} ${PLOT.h}" preserveAspectRatio="none" shape-rendering="crispEdges" role="img" aria-label="DAX PERFORMANCE-INDEX">
          ${MONTHS.map((m) => svg`<path d="M${m.x + 0.5} ${PLOT.y}V${bottom}" stroke=${m.year ? "#b0c4b0" : "#b4beb4"} stroke-dasharray=${m.year ? "none" : "1 4"} />`)}
          ${PRICES.map((p) => {
            const solid = p === 12500 || p === 10000;
            return svg`<path d="M${PLOT.x} ${priceY(p) + 0.5}H${right}" stroke=${solid ? "#b0c4b0" : "#b4beb4"} stroke-dasharray=${solid ? "none" : "1 4"} />`;
          })}
          <g>${CANDLES.map((c) => this.renderCandle(c))}</g>
          <polyline points=${ZIGZAG.map(([x, y]) => `${x + 0.5},${y + 0.5}`).join(" ")} fill="none" stroke="#00f" />
        </svg>
        <div class="legend">
          <div class="legend-row">
            <svg height="16" viewBox="0 0 17 16" aria-hidden="true"><path d="M6.500 0v3M6.500 12v4" stroke="#000" /><rect x="3.500" y="3.500" width="6" height="8" fill="#fff" stroke="#000" /></svg>
            <span>DAX PERFORMANCE-INDEX [.DAX LAST Täglich] 23.05.2017 - </span><span class="open">O:12597,54</span><span> H:12702,61 L:12593,33 </span><span class="close">C:12687,85 +68,39 +0,54%</span>
          </div>
          <div class="legend-row">
            <svg height="16" viewBox="0 0 17 16" aria-hidden="true"><path d="M0 11Q4 0 8 8t8-3" stroke="#000" fill="none" /></svg>
            <span>ZigZag [Close, Percent, 3, Nein, 1, Solid] {.DAX}</span>
          </div>
        </div>
        <button class="close-chart" aria-label="Chart schließen"><svg width="7" height="7" viewBox="0 0 7 7"><path d="M0 0l7 7M7 0L0 7" stroke="#000" /></svg></button>
        <svg class="plug" width="24" height="9" viewBox="0 0 24 9" aria-hidden="true"><path d="M0 4.500h3M10 .500H6q-3 1-3 4t3 4h4zM10 2.500h3M10 6.500h3M13.500.500h4q3 1 3 4t-3 4h-4zM20 4.500h4" stroke="#000" fill="none" /></svg>
      </div>
      <div class="prices">
        <div class="currency">
          <select aria-label="Währung"><option>UNKNOWN</option></select>${caret}
        </div>
        <span class="log">ln</span>
        ${MINOR_PRICES.map((p) => html`<i class="minor" style=${pctY(priceY(p))}></i>`)}
        ${PRICES.map((p) => html`<div class="price" style=${pctY(priceY(p))}>${p},00</div>`)}
        <div class="last" style=${pctY(225)}>
          <svg width="100%" height="18" viewBox="0 0 79 18" preserveAspectRatio="none" aria-hidden="true"><path d="M.500 9L6.500.500h72v17h-72z" fill="#e6e6e6" stroke="#000" /></svg>
          <span>12687,85</span>
        </div>
      </div>
      <div class="dates">
        ${MONTHS.map((m) => html`<div class="date" style=${pctX(m.x)}>${m.label}</div>`)}
        <div class="thumb"></div>
      </div>
      <div class="corner">
        <button aria-label="Stauchen"><svg width="11" height="7" viewBox="0 0 11 7"><path d="M0 3.500h11M2 1l2.500 2.500L2 6M9 1L6.500 3.500 9 6" stroke="#000" fill="none" /></svg></button>
        <button aria-label="Strecken"><svg width="11" height="7" viewBox="0 0 11 7"><path d="M0 3.500h11M3 1L.500 3.500 3 6M8 1l2.500 2.500L8 6" stroke="#000" fill="none" /></svg></button>
        <button aria-label="Anpassen"><svg width="11" height="9" viewBox="0 0 11 9"><path d="M0 5l3-3 2 1 3-2 3 2M0 8h11" stroke="#000" fill="none" /></svg></button>
      </div>
    `;
  }
}

/* ------------------------------------------------------------------ */
/* Terminal shell                                                      */
/* ------------------------------------------------------------------ */

const item = (ic: TemplateResult, label: string, cls = "", menu = false) => html`
  <button class="item ${cls}" ?disabled=${cls === "off"}><span class="slot">${ic}</span><span>${label}</span>${menu ? caret : null}</button>`;

const big = (ic: TemplateResult, lines: string[], cls = "", menu = false) => html`
  <button class="big ${cls}"><span class="pic">${ic}</span>${lines.map((l) => html`<span class="line">${l}</span>`)}${menu ? html`<span class="drop">${caret}</span>` : null}</button>`;

const tool = (ic: TemplateResult, label: string, cls = "") => html`<button class="tool ${cls}" aria-label=${label}>${ic}</button>`;

const group = (name: string, cls: string, body: TemplateResult) => html`
  <section class="group ${cls}" aria-label=${name}>
    <div class="group-body">${body}</div>
    <div class="group-name">${name}</div>
  </section>`;

@customElement("app-root")
export class AppRoot extends LitElement {
  static styles = css`
    :host {
      display: flex;
      flex-direction: column;
      height: 100vh;
      overflow: hidden;
      background: #c3c8d1;
      font: 13px/16px "DejaVu Sans Condensed", "DejaVu Sans", sans-serif;
      font-stretch: condensed;
      color: #4b4e5a;
    }
    button {
      font: inherit;
      color: inherit;
      border: 0;
      padding: 0;
      margin: 0;
      background: none;
      white-space: nowrap;
    }
    .icon { display: block; flex: none; }

    .title {
      display: flex;
      height: 27px;
      flex: none;
      background: linear-gradient(#b9c0ca, #c6ccd5 3px, #cdd2da 12px, #e0e4ec 23px, #b6bac2 24px, #cfd3da);
    }
    .caption {
      display: flex;
      align-items: center;
      gap: 5px;
      width: 461px;
      height: 25px;
      padding-left: 6px;
      box-sizing: border-box;
      white-space: pre;
    }
    .menu-tab {
      width: 94px;
      position: relative;
      display: flex;
      align-items: center;
    }
    .menu-tab svg.shape { position: absolute; inset: 0; }
    .menu-tab button {
      position: relative;
      display: flex;
      align-items: center;
      gap: 3px;
      padding: 5px 0 0 6px;
    }
    .address {
      flex: 1;
      min-width: 0;
      height: 21px;
      margin-top: 5px;
      box-sizing: border-box;
      border: 0;
      border-radius: 0;
      padding: 3px 3px 0;
      background: #fff;
      color: #000;
      font: inherit;
      font-size: 14px;
    }
    .combo {
      display: flex;
      gap: 1px;
      padding-top: 6px;
    }
    .combo button {
      width: 12px;
      height: 20px;
      display: grid;
      place-items: center;
      color: #000;
      background: linear-gradient(#f0f1f5, #c3c5d0);
    }
    .nav {
      display: flex;
      gap: 3px;
      align-items: center;
      padding: 3px 6px 0 2px;
    }
    .system {
      flex: none;
      width: 125px;
      display: flex;
      align-items: center;
      box-sizing: border-box;
      height: 23px;
      margin: 2px 0 0 3px;
      padding: 5px 18px 0 10px;
      border: 1px solid #b4b8bf;
      border-radius: 16px 4px 0 0;
      background: #d2d5da;
      color: #fff;
      gap: 5px;
    }
    .system .user { color: #666a74; width: 10px; overflow: hidden; }
    .system .window { display: flex; flex: 1; justify-content: space-between; }

    .ribbon {
      display: flex;
      gap: 2px;
      flex: none;
      height: 84px;
      box-sizing: border-box;
      padding: 1px 2px;
      border: 1px solid #b2b6be;
      border-radius: 4px;
      background: linear-gradient(#dadee8, #e3e6ed 60%, #f6f7f9);
    }
    .group {
      flex: none;
      display: flex;
      flex-direction: column;
      box-sizing: border-box;
      height: 80px;
      border: 1px solid #85878c;
      border-radius: 3px;
      box-shadow: inset 0 0 0 1px #f4f5f8;
      overflow: hidden;
      background: linear-gradient(#dfe2e9, #d9dde5 16px, #f2f3f6 65px);
    }
    .group-body {
      display: flex;
      height: 65px;
      padding-top: 1px;
      box-sizing: border-box;
      overflow: hidden;
    }
    .group-name {
      height: 13px;
      line-height: 13px;
      text-align: center;
      background: linear-gradient(#d3d7e0, #bec4d1);
    }
    .g-edit { width: 72px; }
    .g-work { width: 123px; }
    .g-insert { width: 426px; }
    .g-search { width: 46px; }
    .g-publish { width: 237px; }
    .g-trade { width: 157px; }
    .g-chart { width: 162px; }
    .g-tools { width: 230px; }
    .g-format { width: 188px; }

    .col { display: flex; flex-direction: column; }
    .item {
      display: flex;
      align-items: center;
      height: 22px;
      flex: none;
      padding-left: 2px;
    }
    .item > .icon { margin-left: 6px; }
    .item .slot { width: 19px; flex: none; display: flex; }
    .item.off { color: #b0b2b8; }
    .item.active {
      height: 21px;
      padding-right: 6px;
      margin-bottom: 1px;
      border-radius: 3px;
      box-shadow: inset 0 0 0 1px #c59650;
      background: linear-gradient(#fbd49a, #ffbd57 50%, #f8a023);
    }
    .insert-grid {
      display: grid;
      grid-template-columns: 113px 86px 100px auto;
      grid-template-rows: repeat(3, 22px);
      grid-auto-flow: column;
      align-content: start;
    }
    .big {
      display: flex;
      flex-direction: column;
      align-items: center;
      flex: none;
      position: relative;
      height: 63px;
      overflow: hidden;
    }
    .pic { height: 36px; flex: none; display: flex; align-items: center; }
    .line { height: 16px; flex: none; position: relative; }
    .drop { padding-top: 2px; }
    .big.routing .drop { position: absolute; right: 2px; bottom: 3px; }
    .w36 { width: 36px; }
    .w44 { width: 44px; }
    .w50 { width: 50px; }
    .w52 { width: 52px; }
    .w54 { width: 54px; }
    .small { width: 20px; }
    .tool { display: grid; place-items: center; height: 22px; width: 19px; flex: none; }
    .tool.on {
      height: 21px;
      border-radius: 3px;
      box-shadow: inset 0 0 0 1px #c59650;
      background: linear-gradient(#fde0a8, #f9a93a);
    }
    .tool-grid {
      display: grid;
      grid-template-columns: repeat(6, 19px);
      grid-template-rows: repeat(3, 22px);
      padding-left: 1px;
      margin-right: 1px;
      height: 58px;
      border-right: 1px solid #b0b4bd;
    }

    .workspace {
      flex: 1;
      min-height: 0;
      display: grid;
      grid-template-columns: 1fr 23px;
      margin-top: 2px;
    }
    .main { display: flex; flex-direction: column; min-width: 0; min-height: 0; }
    .tabs {
      flex: none;
      height: 20px;
      box-sizing: border-box;
      display: flex;
      justify-content: space-between;
      padding: 3px 6px 0 2px;
      border-top: 1px solid #aab0bd;
      background: #e5e8f0;
    }
    .tab {
      display: flex;
      align-items: flex-start;
      gap: 5px;
      height: 17px;
      overflow: hidden;
      box-sizing: border-box;
      padding: 2px 5px 0 2px;
      border: 1px solid #85859f;
      border-bottom: 0;
      border-radius: 3px 3px 0 0;
      background: #ffcf91;
      color: #000;
      font-size: 15px;
      font-weight: 700;
      line-height: 19px;
    }
    .tab .marks { display: flex; }
    .tab-nav { display: flex; align-items: center; gap: 8px; color: #000; }
    .frame {
      flex: 1;
      min-height: 0;
      display: flex;
      border-top: 1px solid #7b7b99;
      border-bottom: 1px solid #7b7b99;
    }
    .frame price-chart {
      flex: 1;
      border-top: 1px solid #555;
      border-left: 2px solid #666;
    }
    .tabs.bottom {
      height: 19px;
      padding: 0 2px;
      border-top: 0;
    }
    .bottom .tab {
      height: 18px;
      border-top: 0;
      border-bottom: 1px solid #85859f;
      border-radius: 0 0 4px 4px;
      gap: 3px;
      padding: 4px 6px 0 3px;
    }
    .grip {
      flex: none;
      height: 8px;
      display: grid;
      place-items: center;
      background: #d9dde4;
    }
    .side {
      display: flex;
      flex-direction: column;
      min-height: 0;
      background: #d9dde4;
      border-left: 1px solid #8fa0b6;
      border-right: 1px solid #aab6c6;
      box-sizing: border-box;
    }
    .side-title {
      flex: 1;
      display: grid;
      place-items: center;
      writing-mode: vertical-rl;
      font-weight: 700;
      font-size: 13px;
      border-top: 1px solid #8fa0b6;
      background: linear-gradient(90deg, #cdd6e2, #dde2ea);
    }
    .side-tools {
      flex: none;
      height: 227px;
      display: grid;
      grid-auto-rows: 1fr;
    }
    .side-tools button {
      display: grid;
      place-items: center;
      border-top: 1px solid #8f98a8;
      background: linear-gradient(#eceef2, #d8dce4);
      overflow: hidden;
    }
    .side-tools .on { background: linear-gradient(#fdd796, #f89d1e); }

    .status {
      flex: none;
      height: 20px;
      display: flex;
      align-items: center;
      justify-content: space-between;
      padding: 7px 35px 0 6px;
      box-sizing: border-box;
      color: #2d3038;
      background: linear-gradient(#aeb4bc 0, #aeb4bc 7px, #a5acb4 7px);
    }
    .status .right { display: flex; align-items: center; gap: 38px; }
    .status svg { display: block; margin-top: -2px; }
  `;

  render() {
    return html`
      <header class="title">
        <div class="caption">${I.app}<span>DAX ZigZag  -  Desktop 1    -  Tradesignal Online Terminal</span></div>
        <div class="menu-tab">
          <svg class="shape" width="94" height="27" viewBox="0 0 94 27" aria-hidden="true">
            <path d="M17.500 24Q20 2.500 38 2.500h56V24z" fill="#cdd1d8" stroke="#b4b8c0" />
            <path d="M77.500 24Q78 6 94 3" fill="none" stroke="#b4b8c0" />
          </svg>
          <button>Datei ${caret}</button>
        </div>
        <input class="address" aria-label="Symbol" value=".dax" />
        <div class="combo">
          <button aria-label="Verlauf">${caret}</button>
          <button aria-label="Los"><svg width="4" height="6" viewBox="0 0 4 6"><path d="M0 0v6l4-3z" /></svg></button>
        </div>
        <div class="nav">
          <button aria-label="Zurück">${I.left}</button>
          <button aria-label="Vorwärts">${I.right}</button>
          <button aria-label="Hilfe">${I.help}</button>
        </div>
        <div class="system">
          <svg width="6" height="10" viewBox="0 0 6 10" aria-hidden="true"><path d="M0 4l3-4 3 4zM0 6h6l-3 4z" fill="#fff" /></svg>
          <span class="user">Sy</span>
          <div class="window">
            <button aria-label="Minimieren"><svg width="9" height="10" viewBox="0 0 9 10"><path d="M0 8.500h9" stroke="#fff" stroke-width="3" /></svg></button>
            <button aria-label="Wiederherstellen"><svg width="10" height="10" viewBox="0 0 10 10"><path d="M3 3V1h6v5H7M1 4h6v5H1z" stroke="#fff" stroke-width="1.500" fill="none" /></svg></button>
            <button aria-label="Schließen"><svg width="9" height="10" viewBox="0 0 9 10"><path d="M1 1l7 8M8 1L1 9" stroke="#fff" stroke-width="2" /></svg></button>
          </div>
        </div>
      </header>

      <nav class="ribbon" aria-label="Menüband">
        ${group("Editieren", "g-edit", html`
          ${big(I.copy, ["Kopier", "en"], "w50")}
          <div class="col small">${tool(I.cut, "Ausschneiden")}${tool(I.paste, "Einfügen")}${tool(I.del, "Löschen")}</div>`)}
        ${group("Arbeitsbereich", "g-work", html`
          ${big(I.neu, ["Neu"], "w36")}
          <div class="col">${item(I.open, "Öffnen", "", true)}${item(I.layout, "Layout", "", true)}${item(I.save, "Speichern")}</div>`)}
        ${group("Einfügen", "g-insert", html`
          <div class="insert-grid">
            ${item(I.chart, "Chart")}${item(I.portfolio, "Portfolio")}${item(I.forward, "Forward-Curve")}
            ${item(I.watch, "Watchliste")}${item(I.scanner, "Scanner")}${item(I.positions, "Positionen")}
            ${item(I.web, "Webbrowser")}${item(I.news, "Nachrichten")}${item(I.depth, "Markttiefe")}
            ${item(I.seasonal, "Saisonaler Chart")}${item(I.profile, "Market Profile")}${item(I.percent, "% Performance")}
          </div>`)}
        ${group("Suche", "g-search", big(I.search, ["Suche"], "w44"))}
        ${group("Veröffentlichen", "g-publish", html`
          ${big(I.print, ["Drucke", "n"], "w50")}${big(I.camera, ["Bild", "speiche"], "w52")}
          <div class="col">${item(I.mail, "als E-Mail senden")}${item(I.forum, "Ins Forum posten")}${item(I.schedule, "Druckplanung")}</div>`)}
        ${group("Handelssystem", "g-trade", html`
          ${big(I.bank, ["Order-", "routing"], "w54 routing", true)}
          <div class="col">${item(I.updown, "Hinzufügen")}${item(I.flask, "Optimieren")}${item(I.perf, "Performance", "off")}</div>`)}
        ${group("Chart", "g-chart", html`
          ${big(I.chartBig, ["Charta", "rt"], "w50")}${big(I.clock, ["Period", "e"], "w36")}${big(I.calendarBig, ["Zeit-", "spanne"], "w54 routing", true)}
          <div class="col small">${tool(I.cursor, "Auswahl", "on")}${tool(I.zoom, "Zoom")}${tool(I.cross, "Fadenkreuz")}</div>`)}
        ${group("Chartwerkzeuge", "g-tools", html`
          <div class="tool-grid">
            ${tool(I.text, "Text")}${tool(I.hLines, "Retracement")}${tool(I.vClock, "Zeitzyklus")}${tool(I.vLines, "Zeitzonen")}${tool(I.arcs, "Bögen")}${tool(I.fan, "Fächer")}
            ${tool(I.trend, "Trendlinie")}${tool(I.parallel, "Parallele")}${tool(I.hRay, "Horizontale")}${tool(I.fork, "Pitchfork")}${tool(I.channel, "Kanal")}${tool(I.regress, "Regression")}
            ${tool(I.arrow, "Pfeil")}${tool(I.vLine, "Vertikale")}${tool(I.ellipse, "Ellipse")}${tool(I.square, "Rechteck")}${tool(I.circle, "Kreis")}${tool(I.half, "Bogen")}
          </div>
          <div class="col">${item(I.magnet, "Magnetmodus")}${item(I.reset, "Zurücksetzen", "active")}${item(I.clear, "Alle entfernen")}</div>`)}
        ${group("Format", "g-format", html`
          ${big(I.picture, ["Stile"], "w36", true)}
          <div class="col">${item(I.calendar, "Handelszeiten")}${item(I.price, "Preiseditor")}${item(I.pie, "Schablone speichern")}</div>`)}
      </nav>

      <div class="workspace">
        <main class="main">
          <div class="tabs">
            <button class="tab">
              <span class="marks">
                <svg class="icon" width="13" height="16" viewBox="0 0 13 16" aria-hidden="true"><path d="M.500.500h4v20h-4zM7.500.500h4v20h-4z" fill="#fff" stroke="#000" /></svg>
                ${I.chart}
              </span>
              DAX PERFORMANCE-INDEX
            </button>
            <div class="tab-nav">
              <button aria-label="Vorherige"><svg class="icon" width="5" height="9" viewBox="0 0 5 9"><path d="M4.500.500v8l-4-4z" fill="none" stroke="#6d6d8d" /></svg></button>
              <button aria-label="Nächste"><svg class="icon" width="5" height="9" viewBox="0 0 5 9"><path d="M.500.500v8l4-4z" fill="none" stroke="#6d6d8d" /></svg></button>
              <button aria-label="Schließen"><svg class="icon" width="8" height="8" viewBox="0 0 8 8"><path d="M.500.500l7 7M7.500.500l-7 7" stroke="#000" stroke-width="1.800" /></svg></button>
            </div>
          </div>
          <div class="frame"><price-chart></price-chart></div>
          <div class="tabs bottom"><button class="tab">${I.newsDoc}DAX ZigZag</button></div>
          <div class="grip">
            <svg width="90" height="3" viewBox="0 0 90 3" aria-hidden="true"><path d="M0 1.500h90" stroke="#3f434b" stroke-width="2" stroke-dasharray="3 3" /></svg>
          </div>
        </main>
        <aside class="side">
          <div class="side-title">Werkzeugleiste</div>
          <div class="side-tools">
            <button aria-label="Favoriten">${I.star}</button>
            <button class="on" aria-label="Eigenschaften">${I.props}</button>
            <button aria-label="Indikatoren">${I.indicators}</button>
            <button aria-label="Handel">${I.updown}</button>
            <button aria-label="Formeln">${I.sigma}</button>
            <button aria-label="Schablonen">${I.pie}</button>
            <button aria-label="Arbeitsbereiche">${I.newsDoc}</button>
            <button aria-label="Hilfe">${I.help}</button>
          </div>
        </aside>
      </div>

      <footer class="status">
        <span>Bereit</span>
        <div class="right">
          <svg width="13" height="13" viewBox="0 0 13 13" aria-hidden="true"><circle cx="6.500" cy="6.500" r="5.800" fill="#3fd40d" stroke="#1d6b08" /><ellipse cx="5.500" cy="4" rx="3" ry="1.800" fill="#b4f59a" /></svg>
          <span>12:55</span>
        </div>
      </footer>
    `;
  }
}
